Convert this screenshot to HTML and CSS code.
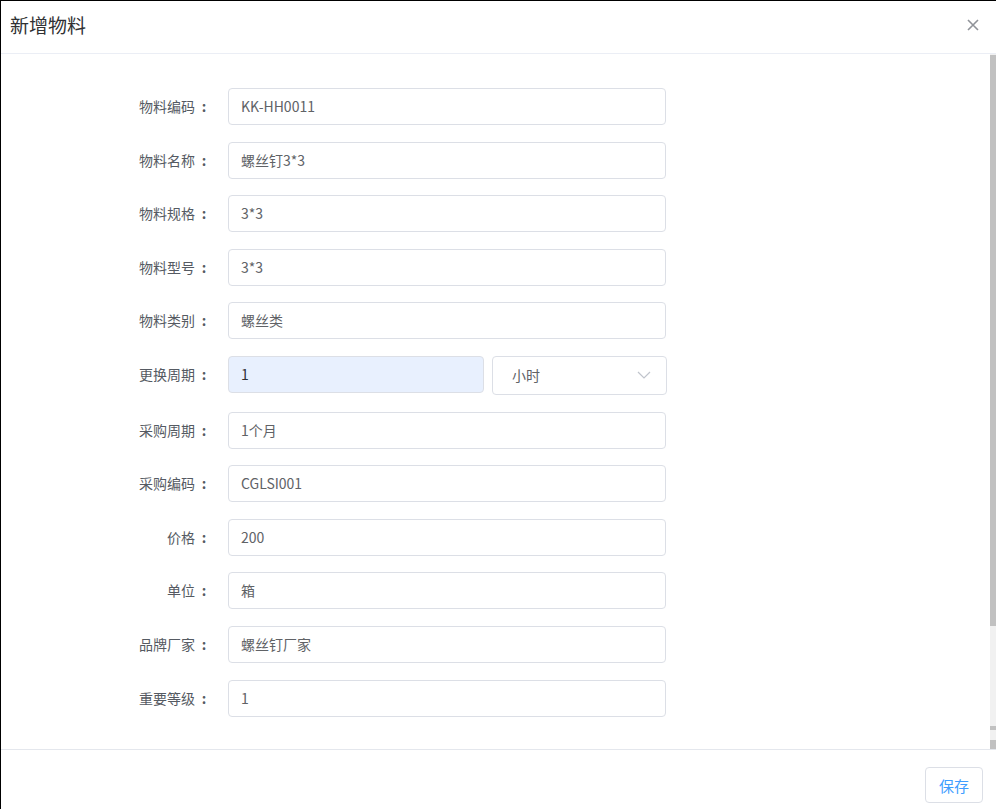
FILE: index.html
```html
<!DOCTYPE html>
<html lang="zh">
<head>
<meta charset="utf-8">
<title>新增物料</title>
<link rel="stylesheet" href="styles.css">
</head>
<body>
<div class="dialog">
  <header class="dialog-header">
    <span class="dialog-title">新增物料</span>
    <svg class="close" width="12" height="12" viewBox="0 0 12 12"><path d="M1 1 L11 11 M11 1 L1 11" stroke="#909399" stroke-width="1.6" fill="none"/></svg>
  </header>
  <div class="dialog-body">
    <div class="scroll-content">
      <form class="form">
        <label class="label">物料编码<span class="colon">:</span></label><div class="field"><div class="input">KK-HH0011</div></div>
        <label class="label">物料名称<span class="colon">:</span></label><div class="field"><div class="input">螺丝钉3*3</div></div>
        <label class="label">物料规格<span class="colon">:</span></label><div class="field"><div class="input">3*3</div></div>
        <label class="label">物料型号<span class="colon">:</span></label><div class="field"><div class="input">3*3</div></div>
        <label class="label">物料类别<span class="colon">:</span></label><div class="field"><div class="input">螺丝类</div></div>
        <label class="label">更换周期<span class="colon">:</span></label>
        <div class="field split">
          <div class="input autofill">1</div>
          <div class="input select">小时
            <svg class="arrow" width="14" height="8" viewBox="0 0 14 8"><path d="M1 1 L7 7 L13 1" stroke="#c0c4cc" stroke-width="1.2" fill="none"/></svg>
          </div>
        </div>
        <label class="label">采购周期<span class="colon">:</span></label><div class="field"><div class="input">1个月</div></div>
        <label class="label">采购编码<span class="colon">:</span></label><div class="field"><div class="input">CGLSI001</div></div>
        <label class="label">价格<span class="colon">:</span></label><div class="field"><div class="input">200</div></div>
        <label class="label">单位<span class="colon">:</span></label><div class="field"><div class="input">箱</div></div>
        <label class="label">品牌厂家<span class="colon">:</span></label><div class="field"><div class="input">螺丝钉厂家</div></div>
        <label class="label">重要等级<span class="colon">:</span></label><div class="field"><div class="input">1</div></div>
      </form>
    </div>
    <div class="scrollbar">
      <div class="thumb"></div>
      <div class="track"></div>
      <div class="btn"></div>
      <div class="gap"></div>
      <div class="btn2"></div>
    </div>
  </div>
  <footer class="dialog-footer">
    <button class="btn-save" type="button">保存</button>
  </footer>
</div>
</body>
</html>
```
FILE: styles.css
```css
* { box-sizing: border-box; }
html, body { margin: 0; padding: 0; background: #fff; }
body {
  font-family: "Noto Sans CJK SC", "Noto Sans", "Liberation Sans", sans-serif;
  color: #606266;
}
.dialog {
  width: 996px;
  height: 809px;
  border-top: 1px solid #000;
  border-left: 1px solid #000;
  display: flex;
  flex-direction: column;
  background: #fff;
}
.dialog-header {
  height: 53px;
  flex: none;
  border-bottom: 1px solid #ebeef5;
  display: flex;
  align-items: center;
  justify-content: space-between;
  padding: 0 17px 4px 9px;
}
.dialog-title {
  font-size: 19px;
  color: #303133;
  line-height: 24px;
}
.close { display: block; }
.dialog-body {
  flex: 1;
  display: flex;
  min-height: 0;
}
.scroll-content { flex: 1; }
.form {
  display: grid;
  grid-template-columns: 212px 438px;
  column-gap: 15px;
  row-gap: 16.6px;
  padding-top: 34px;
  margin: 0;
}
.label {
  font-size: 14px;
  color: #555a62;
  text-align: right;
  line-height: 37px;
  white-space: nowrap;
}
.colon {
  display: inline-block;
  width: 18px;
  text-align: center;
  font-weight: 700;
}
.field { display: flex; }
.field.split { gap: 8px; }
.input {
  flex: 1;
  height: 37px;
  border: 1px solid #dcdfe6;
  border-radius: 4px;
  padding: 0 12px;
  font-size: 14px;
  line-height: 35px;
  color: #606266;
  background: #fff;
}
.input.autofill {
  flex: none;
  width: 256px;
  background: #e8f0fe;
  color: #303133;
}
.input.select {
  flex: none;
  width: 175px;
  padding-left: 19px;
  height: 39px;
  line-height: 37px;
  display: flex;
  align-items: center;
  justify-content: space-between;
  padding-right: 15px;
  color: #606266;
}
.arrow { display: block; }
.scrollbar {
  width: 6px;
  flex: none;
  display: flex;
  flex-direction: column;
  background: #f1f1f1;
  padding-top: 1px;
}
.thumb { height: 571px; background: #c1c1c1; flex: none; }
.track { flex: 1; }
.btn { height: 4px; background: #c1c1c1; flex: none; }
.gap { height: 10px; flex: none; }
.btn2 { height: 9px; background: #c1c1c1; flex: none; }
.dialog-footer {
  flex: none;
  height: 60px;
  border-top: 1px solid #e4e7ed;
  display: flex;
  justify-content: flex-end;
  align-items: flex-start;
  padding: 17px 13px 0 0;
}
.btn-save {
  width: 58px;
  height: 36px;
  border: 1px solid #dcdfe6;
  border-radius: 4px;
  background: #fff;
  color: #409eff;
  font-family: "Noto Sans CJK SC", "Noto Sans", sans-serif;
  font-size: 15px;
  padding: 0;
  cursor: pointer;
}
```
